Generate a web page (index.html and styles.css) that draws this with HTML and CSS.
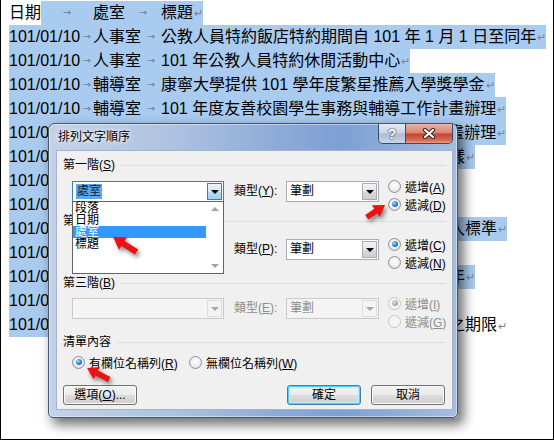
FILE: index.html
```html
<!DOCTYPE html>
<html lang="zh-Hant">
<head>
  <meta charset="UTF-8">
  <title>排列文字順序</title>
  <link rel="stylesheet" href="styles.css">
</head>
<body>

<div class="page">

  <div class="doc">
    <div class="line"><span class="c1"><span class="plain">日期</span><span class="tab">→</span></span><span class="c2">處室<span class="tab">→</span></span><span class="c3">標題<span class="pm">↵</span></span></div>
    <div class="line"><span class="c1">101/01/10<span class="tab">→</span></span><span class="c2">人事室<span class="tab">→</span></span><span class="c3">公教人員特約飯店特約期間自 101 年 1 月 1 日至同年<span class="pm">↵</span></span></div>
    <div class="line"><span class="c1">101/01/10<span class="tab">→</span></span><span class="c2">人事室<span class="tab">→</span></span><span class="c3">101 年公教人員特約休閒活動中心<span class="pm">↵</span></span></div>
    <div class="line"><span class="c1">101/01/10<span class="tab">→</span></span><span class="c2">輔導室<span class="tab">→</span></span><span class="c3">康寧大學提供 101 學年度繁星推薦入學獎學金<span class="pm">↵</span></span></div>
    <div class="line"><span class="c1">101/01/10<span class="tab">→</span></span><span class="c2">輔導室<span class="tab">→</span></span><span class="c3">101 年度友善校園學生事務與輔導工作計畫辦理<span class="pm">↵</span></span></div>
    <div class="line"><span class="c1">101/01/10<span class="tab">→</span></span><span class="c2">輔導室<span class="tab">→</span></span><span class="c3">101 年度校園學生事務與輔導工作研習計畫辦理<span class="pm">↵</span></span></div>
    <div class="line"><span class="c1">101/01/10<span class="tab">→</span></span><span class="c2">教務處<span class="tab">→</span></span><span class="c3">補助辦理學生社團活動經費申請表格實施樣<span class="pm">↵</span></span></div>
    <div class="line"><span class="c1">101/01/10<span class="tab">→</span></span><span class="c2">教務處<span class="tab">→</span></span><span class="c3">教師甄選簡章及報名表<span class="pm">↵</span></span></div>
    <div class="line"><span class="c1">101/01/10<span class="tab">→</span></span><span class="c2">學務處<span class="tab">→</span></span><span class="c3">校園安全宣導活動實施計畫<span class="pm">↵</span></span></div>
    <div class="line"><span class="c1">101/01/10<span class="tab">→</span></span><span class="c2">學務處<span class="tab">→</span></span><span class="c3">大專校院弱勢學生助學計畫申請家庭年收入標準<span class="pm">↵</span></span></div>
    <div class="line"><span class="c1">101/01/10<span class="tab">→</span></span><span class="c2">總務處<span class="tab">→</span></span><span class="c3">節約能源實施計畫<span class="pm">↵</span></span></div>
    <div class="line"><span class="c1">101/01/10<span class="tab">→</span></span><span class="c2">人事室<span class="tab">→</span></span><span class="c3">全國語文競賽實施計畫延長報名期間至同年<span class="pm">↵</span></span></div>
    <div class="line"><span class="c1">101/01/10<span class="tab">→</span></span><span class="c2">人事室<span class="tab">→</span></span><span class="c3">教師進修研習實施要點<span class="pm">↵</span></span></div>
    <div class="line"><span class="c1">101/01/10<span class="tab">→</span></span><span class="c2">人事室<span class="tab">→</span></span><span class="c3">延長辦理國民中小學教師申請介聘第二<span class="plain">次之期限<span class="pm">↵</span></span></span></div>
  </div>

  <div class="dialog">
    <div class="titlebar">
      <div class="title">排列文字順序</div>
      <div class="caps">
        <div class="cap help">?</div>
        <div class="cap close">
          <svg width="14" height="11" viewBox="0 0 14 11">
            <path d="M3 2 L11 9 M11 2 L3 9" stroke="#3b2520" stroke-width="4.2" stroke-linecap="round"/>
            <path d="M3 2 L11 9 M11 2 L3 9" stroke="#fff" stroke-width="2.2" stroke-linecap="round"/>
          </svg>
        </div>
      </div>
    </div>

    <div class="client">
      <div class="group g1"><span class="lbl">第一階(<u>S</u>)</span><span class="rule"></span></div>
      <div class="row r1">
        <div class="combo focus w151"><span class="val"><span class="hl">處室</span></span><span class="btn"><span class="caret"></span></span></div>
        <div class="type">類型(<u>Y</u>):</div>
        <div class="combo w92"><span class="val">筆劃</span><span class="btn"><span class="caret"></span></span></div>
        <div class="radios">
          <div class="opt"><span class="radio"></span><span class="lbl">遞增(<u>A</u>)</span></div>
          <div class="opt"><span class="radio on"></span><span class="lbl">遞減(<u>D</u>)</span></div>
        </div>
      </div>

      <div class="group g2"><span class="lbl">第二階(<u>T</u>)</span><span class="rule"></span></div>
      <div class="row r2">
        <div class="combo w151"><span class="val">標題</span><span class="btn"><span class="caret"></span></span></div>
        <div class="type">類型(<u>P</u>):</div>
        <div class="combo w92"><span class="val">筆劃</span><span class="btn"><span class="caret"></span></span></div>
        <div class="radios">
          <div class="opt"><span class="radio on"></span><span class="lbl">遞增(<u>C</u>)</span></div>
          <div class="opt"><span class="radio"></span><span class="lbl">遞減(<u>N</u>)</span></div>
        </div>
      </div>

      <div class="group g3"><span class="lbl">第三階(<u>B</u>)</span><span class="rule"></span></div>
      <div class="row r3 dis">
        <div class="combo w151"><span class="val"></span><span class="btn"><span class="caret"></span></span></div>
        <div class="type">類型(<u>E</u>):</div>
        <div class="combo w92"><span class="val">筆劃</span><span class="btn"><span class="caret"></span></span></div>
        <div class="radios">
          <div class="opt"><span class="radio on"></span><span class="lbl">遞增(<u>I</u>)</span></div>
          <div class="opt"><span class="radio"></span><span class="lbl">遞減(<u>G</u>)</span></div>
        </div>
      </div>

      <div class="group g4"><span class="lbl">清單內容</span><span class="rule"></span></div>
      <div class="header-opts">
        <div class="opt wide"><span class="radio on"></span><span class="lbl">有欄位名稱列(<u>R</u>)</span></div>
        <div class="opt"><span class="radio"></span><span class="lbl">無欄位名稱列(<u>W</u>)</span></div>
      </div>

      <div class="actions">
        <button class="win-btn">選項(<u>O</u>)...</button>
        <button class="win-btn ok">確定</button>
        <button class="win-btn cancel">取消</button>
      </div>

      <div class="list">
        <div class="items">
          <div class="item">段落</div>
          <div class="item">日期</div>
          <div class="item sel">處室</div>
          <div class="item">標題</div>
        </div>
        <div class="scroll">
          <span class="up"></span>
          <span class="down"></span>
        </div>
      </div>
    </div>
  </div>

  <svg class="marks" width="554" height="440">
    <g transform="translate(113 237) rotate(-147.4)"><polygon points="0,0 -12,-7.5 -12,-3 -28,-3 -28,3 -12,3 -12,7.5"/></g>
    <g transform="translate(385 205) rotate(-33.7)"><polygon points="0,0 -11,-7 -11,-2.8 -22,-2.8 -22,2.8 -11,2.8 -11,7"/></g>
    <g transform="translate(87 368) rotate(-152.4)"><polygon points="0,0 -11,-7 -11,-2.8 -25,-2.8 -25,2.8 -11,2.8 -11,7"/></g>
  </svg>

</div>

</body>
</html>
```

FILE: styles.css
```css
body {
  margin: 0;
  background: #fff;
  font-family: "Liberation Sans", "Noto Sans CJK TC", sans-serif;
}
.page {
  position: relative;
  width: 554px;
  height: 440px;
  box-sizing: border-box;
  border: 1px solid #000;
  border-top: none;
  overflow: hidden;
  background: #fff;
}

/* document text behind the dialog */
.doc {
  padding: 1px 0 0 8px;
  font-size: 16px;
  color: #000;
}
.line {
  display: flex;
  width: max-content;
  height: 24px;
  line-height: 24px;
  white-space: nowrap;
  background: #a9cbef;
}
.c1 { display: flex; width: 84px; }
.c2 { display: flex; width: 68px; }
.c3 { display: flex; }
.tab {
  flex: 1;
  text-align: center;
  font-family: "DejaVu Sans", sans-serif;
  font-size: 10px;
  color: #6f7f9c;
}
.pm {
  font-size: 11px;
  color: #7484a0;
  padding-left: 1px;
}
.plain { background: #fff; }

/* dialog window */
.dialog {
  position: absolute;
  left: 47px;
  top: 123px;
  width: 410px;
  height: 295px;
  box-sizing: border-box;
  display: flex;
  flex-direction: column;
  padding: 0 4px 7px 7px;
  border: 1px solid #46566c;
  border-radius: 7px 7px 5px 5px;
  background: linear-gradient(90deg, #c3d2e7 0%, #aec3e0 30%, #8fabd8 55%, #7d9fd4 72%, #a5bee2 100%);
  box-shadow: inset 0 0 0 1px rgba(255,255,255,0.45), 5px 6px 12px 1px rgba(0,0,0,0.55);
  font-family: "Liberation Sans", "Noto Sans CJK TC", sans-serif;
  font-size: 12px;
  color: #000;
}
.titlebar {
  display: flex;
  height: 26px;
}
.title {
  flex: 1;
  padding: 7px 0 0 2px;
  line-height: 13px;
  text-shadow: 0 0 6px #fff, 0 0 3px rgba(255,255,255,0.8);
}
.caps {
  display: flex;
  height: 19px;
  border: 1px solid #3c4a5e;
  border-top: none;
  border-radius: 0 0 5px 5px;
  overflow: hidden;
}
.cap {
  display: flex;
  align-items: center;
  justify-content: center;
}
.help {
  width: 26px;
  border-right: 1px solid #3c4a5e;
  background: linear-gradient(#e3eaf3, #c7d4e6 48%, #a9bcd7 52%, #c8d6ea);
  color: #fff;
  font-weight: bold;
  font-size: 14px;
  text-shadow: 0 0 2px #2a3547, 0 0 1px #2a3547;
}
.close {
  width: 46px;
  background: linear-gradient(#eab2a5, #d98470 48%, #c3432d 52%, #d66a55 85%, #e89d8b);
}

.client {
  position: relative;
  flex: 1;
  display: flex;
  flex-direction: column;
  padding: 0 6px;
  border: 1px solid #a3b3c8;
  background: #f0f0f0;
}
.lbl { white-space: nowrap; }
.group {
  display: flex;
  align-items: center;
  gap: 6px;
  height: 14px;
  line-height: 14px;
}
.group .rule {
  flex: 1;
  height: 1px;
  background: #d5dfe5;
}
.g1 { margin-top: 7px; }
.g2 { margin-top: 1px; }
.g3 { margin-top: 5px; }
.g4 { margin-top: 5px; }
.r1 { margin-top: 5px; }
.r2 { margin-top: 7px; }
.r3 { margin-top: 4px; }

.row {
  display: flex;
  align-items: flex-start;
  height: 36px;
  padding-left: 9px;
}
.combo {
  display: flex;
  flex: none;
  height: 21px;
  margin-top: 4px;
  box-sizing: border-box;
  border: 1px solid #abadb3;
  background: #fff;
}
.w151 { width: 152px; }
.w92 { width: 93px; }
.combo .val {
  flex: 1;
  padding-left: 3px;
  line-height: 19px;
}
.combo .btn {
  display: flex;
  align-items: center;
  justify-content: center;
  width: 15px;
  margin: 1px;
  box-sizing: border-box;
  border: 1px solid #acacac;
  background: linear-gradient(#f3f3f3, #e6e6e6 50%, #d8d8d8 50%, #cfcfcf);
}
.caret {
  width: 0;
  height: 0;
  border-left: 4px solid transparent;
  border-right: 4px solid transparent;
  border-top: 4px solid #000;
}
.combo.focus { border-color: #3c7fb1; }
.combo.focus .btn {
  border-color: #3c7fb1;
  background: linear-gradient(#e6f3fb, #d3ebf8 50%, #b5dcf3 50%, #a4d0ec);
}
.combo .hl {
  display: inline-block;
  line-height: 15px;
  padding: 0 1px;
  background: #5aa8f2;
  color: #0b1d3c;
}
.type {
  flex: none;
  width: 52px;
  margin: 4px 0 0 10px;
  line-height: 21px;
  white-space: nowrap;
}
.radios {
  flex: none;
  margin-left: 9px;
}
.opt {
  display: flex;
  align-items: center;
  gap: 4px;
  height: 18px;
}
.radio {
  position: relative;
  flex: none;
  width: 13px;
  height: 13px;
  box-sizing: border-box;
  border-radius: 50%;
  border: 1px solid #8f8f8f;
  background: radial-gradient(circle at 50% 40%, #fff 0, #f1f1f1 45%, #d2d2d2 100%);
}
.radio.on::after {
  content: "";
  position: absolute;
  left: 2.5px;
  top: 2.5px;
  width: 6px;
  height: 6px;
  border-radius: 50%;
  background: radial-gradient(circle at 35% 35%, #aee6ff 0, #2a8de0 45%, #0b4f96 100%);
}

.dis { color: #8d8d8d; }
.dis .combo { border-color: #c9c9c9; background: #f4f4f4; }
.dis .combo .btn { border-color: #dcdcdc; background: #f4f4f4; }
.dis .caret { border-top-color: #a6a6a6; }
.dis .radio { border-color: #c5c5c5; background: #f4f4f4; }
.dis .radio.on::after { background: radial-gradient(circle at 35% 35%, #e0e0e0 0, #a8a8a8 60%, #8e8e8e 100%); }

.header-opts {
  display: flex;
  margin-top: 4px;
  padding-left: 9px;
}
.opt.wide { width: 117px; }

.actions {
  display: flex;
  margin: 14px 1px 0 0;
}
.win-btn {
  width: 74px;
  height: 20px;
  padding: 0;
  box-sizing: border-box;
  border: 1px solid #707070;
  border-radius: 3px;
  background: linear-gradient(#f2f2f2, #ebebeb 50%, #dddddd 50%, #cfcfcf);
  box-shadow: inset 0 0 0 1px #fcfcfc;
  font: inherit;
  color: #000;
  line-height: 18px;
}
.win-btn.ok {
  margin-left: auto;
  border-color: #3c7fb1;
  box-shadow: inset 0 0 0 1px #48d0fc, inset 0 0 0 2px #c6ecfd;
}
.win-btn.cancel { margin-left: 10px; }

/* opened drop-down list of the first combo */
.list {
  position: absolute;
  left: 15px;
  top: 50px;
  width: 152px;
  height: 73px;
  box-sizing: border-box;
  display: flex;
  border: 1px solid #646464;
  background: #fff;
}
.items { flex: 1; }
.item {
  height: 12px;
  line-height: 12px;
  padding-left: 2px;
}
.item.sel {
  background: #3399ff;
  color: #fff;
}
.scroll {
  display: flex;
  flex-direction: column;
  justify-content: space-between;
  align-items: center;
  width: 17px;
  padding: 5px 0;
  box-sizing: border-box;
}
.scroll .up,
.scroll .down {
  width: 0;
  height: 0;
  border-left: 4px solid transparent;
  border-right: 4px solid transparent;
}
.scroll .up { border-bottom: 4px solid #a3a3a3; }
.scroll .down { border-top: 4px solid #a3a3a3; }

/* red pointer arrows drawn over the screenshot */
.marks {
  position: absolute;
  left: -1px;
  top: 0;
  fill: #ee1111;
  filter: drop-shadow(2px 3px 2px rgba(0,0,0,0.45));
  pointer-events: none;
}
```
